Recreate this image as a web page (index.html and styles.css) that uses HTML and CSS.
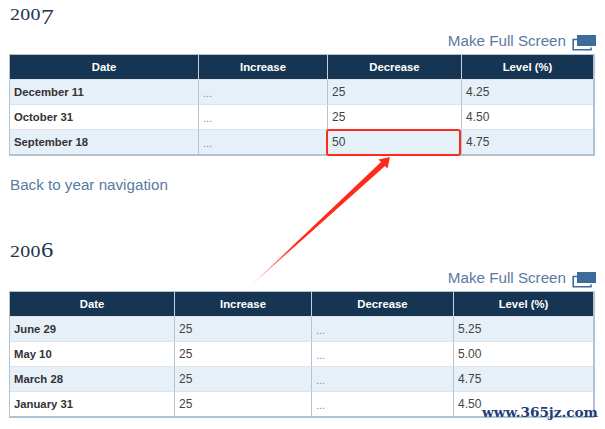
FILE: index.html
```html
<!DOCTYPE html>
<html lang="en">
<head>
<meta charset="utf-8">
<title>Fed rate history</title>
<link rel="stylesheet" href="styles.css">
</head>
<body>
<main class="page">
  <section class="year year-2007">
    <h2 class="year-title">200<span class="fig-drop">7</span></h2>
    <a class="full-link" href="#">Make Full Screen
      <svg class="full-icon" viewBox="0 0 24 16" aria-hidden="true"><path class="icon-back" d="M5 4.5H1.2V14.8H19V12.5"/><rect class="icon-front" x="5" y="0" width="19" height="11"/></svg>
    </a>
    <table class="rates">
      <colgroup><col class="c1a"><col class="c2a"><col class="c3a"><col class="c4a"></colgroup>
      <thead><tr><th>Date</th><th>Increase</th><th>Decrease</th><th>Level (%)</th></tr></thead>
      <tbody>
        <tr><td class="date">December 11</td><td class="none">...</td><td>25</td><td>4.25</td></tr>
        <tr><td class="date">October 31</td><td class="none">...</td><td>25</td><td>4.50</td></tr>
        <tr><td class="date">September 18</td><td class="none">...</td><td class="marked">50</td><td>4.75</td></tr>
      </tbody>
    </table>
    <a class="back-link" href="#">Back to year navigation</a>
  </section>
  <section class="year year-2006">
    <h2 class="year-title">200<span class="fig-rise">6</span></h2>
    <a class="full-link" href="#">Make Full Screen
      <svg class="full-icon" viewBox="0 0 24 16" aria-hidden="true"><path class="icon-back" d="M5 4.5H1.2V14.8H19V12.5"/><rect class="icon-front" x="5" y="0" width="19" height="11"/></svg>
    </a>
    <table class="rates">
      <colgroup><col class="c1b"><col class="c2b"><col class="c3b"><col class="c4b"></colgroup>
      <thead><tr><th>Date</th><th>Increase</th><th>Decrease</th><th>Level (%)</th></tr></thead>
      <tbody>
        <tr><td class="date">June 29</td><td>25</td><td class="none">...</td><td>5.25</td></tr>
        <tr><td class="date">May 10</td><td>25</td><td class="none">...</td><td>5.00</td></tr>
        <tr><td class="date">March 28</td><td>25</td><td class="none">...</td><td>4.75</td></tr>
        <tr><td class="date">January 31</td><td>25</td><td class="none">...</td><td>4.50</td></tr>
      </tbody>
    </table>
  </section>
</main>
<svg class="arrow" viewBox="0 0 605 429" aria-hidden="true">
  <defs><linearGradient id="fade" gradientUnits="userSpaceOnUse" x1="245" y1="291" x2="295" y2="245"><stop offset="0" stop-color="#ff2a1a" stop-opacity="0"/><stop offset="1" stop-color="#ff2a1a"/></linearGradient></defs>
  <polygon fill="url(#fade)" points="245,291 381,162 378.5,159.5 390,157 387.5,168.5 385,166"/>
</svg>
<div class="watermark">www.365jz.com</div>
</body>
</html>
```
FILE: styles.css
```css
* { box-sizing: border-box; }
html, body { margin: 0; background: #fff; }
body { width: 605px; height: 429px; overflow: hidden; position: relative; font-family: "Liberation Sans", Arial, sans-serif; }
.page { padding: 0 9px; display: flex; flex-direction: column; }
.year { display: flex; flex-direction: column; }
.year-2006 { margin-top: 43px; }
.year-title { align-self: flex-start; margin: 4px 0 0 1px; height: 22px; font: 400 17px/22px "Liberation Serif", serif; letter-spacing: 0.3px; color: #1c3550; transform: scaleX(1.17); transform-origin: left center; }
.fig-drop { font-size: 22px; line-height: 0; vertical-align: -4px; }
.fig-rise { font-size: 21px; line-height: 0; }
.full-link { align-self: flex-end; display: flex; align-items: flex-start; gap: 6px; margin-top: 4px; height: 24px; font-size: 15.2px; line-height: 22px; color: #5a7aa3; text-decoration: none; }
.full-icon { width: 24px; height: 16px; display: block; margin-top: 5px; }
.icon-back { fill: none; stroke: #3f6a9c; stroke-width: 1.6; }
.icon-front { fill: #3f6a9c; }
.rates { width: 586px; table-layout: fixed; border-collapse: separate; border-spacing: 0; border-style: solid; border-color: #b4c3d2; border-width: 1px 2px 2px 1px; font-size: 12px; }
.c1a { width: 188px; } .c2a { width: 129px; } .c3a { width: 134px; } .c4a { width: 132px; }
.c1b { width: 164px; } .c2b { width: 137px; } .c3b { width: 142px; } .c4b { width: 140px; }
.rates th { height: 24px; background: #163552; color: #fff; font-size: 11.3px; font-weight: 700; text-align: center; border-left: 1px solid #c5d1dc; padding: 0; }
.rates th:first-child { border-left: 0; }
.rates td { height: 25px; padding: 0 4px; color: #444; border-left: 1px solid #b4c3d2; border-top: 1px solid #dde3e8; background: #fff; }
.rates td:first-child { border-left: 0; }
.rates tbody tr:nth-child(odd) td { background: #e6f0f9; }
.rates .date { font-size: 11.3px; font-weight: 700; color: #333; }
.rates .none { color: #8a8a8a; font-size: 11px; padding-top: 1px; }
.rates .marked { position: relative; }
.marked::after { content: ""; position: absolute; inset: -1px 0 -2px -2px; border: 2.5px solid #ff2a1a; border-radius: 3px; }
.back-link { margin-top: 20px; font-size: 15.2px; line-height: 18px; color: #5a7aa3; text-decoration: none; align-self: flex-start; margin-left: 1px; }
.arrow { position: absolute; left: 0; top: 0; width: 605px; height: 429px; pointer-events: none; }
.watermark { position: absolute; left: 482px; top: 403px; font: 700 13.6px/18px "DejaVu Serif", serif; color: #1d3c78; }
```
